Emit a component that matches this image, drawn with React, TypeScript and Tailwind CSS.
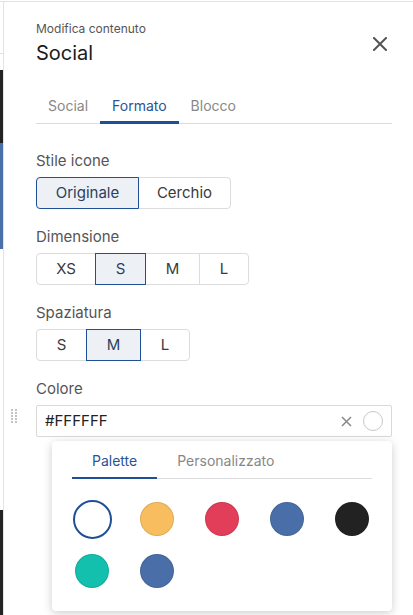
import React from "react";

function Btn({ label, w, sel, first, last }: { label: string; w: string; sel?: boolean; first?: boolean; last?: boolean }) {
  return (
    <div
      className={
        "h-[32px] flex items-center justify-center border text-[15px] " +
        w +
        (first ? " rounded-l-[4px]" : " -ml-px") +
        (last ? " rounded-r-[4px]" : "") +
        (sel ? " border-[#1f4f96] bg-[#edf1f6] text-[#2b3f5c] relative z-10" : " border-[#dcdcdc] bg-white text-[#3a3a3a]")
      }
    >
      {label}
    </div>
  );
}

function Section({ label, children }: { label: string; children: React.ReactNode }) {
  return (
    <div className="flex flex-col">
      <div className="text-[15px] leading-5 text-[#555]">{label}</div>
      <div className="mt-[6px] flex">{children}</div>
    </div>
  );
}

export default function App() {
  const colors = ["#f8bd5f", "#e23e5a", "#4a6fa8", "#222222", "#13bfad", "#4a6fa8"];
  return (
    <div className="w-[413px] h-[615px] overflow-hidden bg-white font-['Inter',sans-serif] flex flex-col">
      <div className="h-px mt-px bg-[#e3e3e3] shrink-0" />
      <div className="flex flex-1">
        <div className="w-[3px] flex flex-col shrink-0">
          <div className="h-[51px] bg-white" />
          <div className="h-px bg-[#e0e0e0]" />
          <div className="h-[16px] bg-white" />
          <div className="h-[73px] bg-[#232323]" />
          <div className="h-[106px] bg-[#4a70aa]" />
          <div className="h-[261px] bg-white" />
          <div className="flex-1 bg-[#232323]" />
        </div>
        <div className="flex-1 border-l border-[#e3e3e3] pl-[32px] pr-[21px] flex flex-col">
          <div className="pt-[19px] flex items-center justify-between">
            <div className="flex flex-col">
              <div className="text-[12px] leading-4 text-[#555]">Modifica contenuto</div>
              <div className="text-[20px] leading-7 mt-[2px] text-[#1c1c1c]">Social</div>
            </div>
            <svg width="14" height="14" viewBox="0 0 14 14" className="mr-[5px]">
              <path d="M1 1L13 13M13 1L1 13" stroke="#555" strokeWidth="2" strokeLinecap="square" />
            </svg>
          </div>

          <div className="mt-[29px] flex border-b border-[#dcdcdc]">
            <div className="px-3 pb-[5px] border-b-[3px] border-transparent -mb-px text-[14px] leading-5 text-[#888]">Social</div>
            <div className="px-3 pb-[5px] border-b-[3px] border-[#1f4f96] -mb-px text-[14px] leading-5 text-[#2a5495]">Formato</div>
            <div className="px-3 pb-[5px] border-b-[3px] border-transparent -mb-px text-[14px] leading-5 text-[#888]">Blocco</div>
          </div>

          <div className="mt-[27px] flex flex-col gap-[18px]">
            <Section label="Stile icone">
              <Btn label="Originale" w="w-[103px]" sel first />
              <Btn label="Cerchio" w="w-[93px]" last />
            </Section>
            <Section label="Dimensione">
              <Btn label="XS" w="w-[60px]" first />
              <Btn label="S" w="w-[51px]" sel />
              <Btn label="M" w="w-[55px]" />
              <Btn label="L" w="w-[50px]" last />
            </Section>
            <Section label="Spaziatura">
              <Btn label="S" w="w-[51px]" first />
              <Btn label="M" w="w-[55px]" sel />
              <Btn label="L" w="w-[50px]" last />
            </Section>
            <div className="flex flex-col">
              <div className="text-[15px] leading-5 text-[#555]">Colore</div>
              <div className="mt-[6px] flex items-start -ml-[25px]">
                <div className="w-[25px] pt-[4px]">
                  <svg width="6" height="15" viewBox="0 0 6 15">
                    {[0, 1, 2, 3, 4].map((r) => (
                      <g key={r}>
                        <rect x="0" y={r * 3} width="2" height="2" fill="#c4c4c4" />
                        <rect x="4" y={r * 3} width="2" height="2" fill="#c4c4c4" />
                      </g>
                    ))}
                  </svg>
                </div>
                <div className="flex-1 h-[32px] border border-[#d9d9d9] rounded-[2px] pl-[8px] pr-[8px] flex items-center">
                  <span className="flex-1 text-[15px] text-[#222]">#FFFFFF</span>
                  <svg width="11" height="11" viewBox="0 0 11 11">
                    <path d="M1 1L10 10M10 1L1 10" stroke="#888" strokeWidth="1.5" />
                  </svg>
                  <div className="ml-[11px] w-[20px] h-[20px] rounded-full border border-[#c8c8c8] bg-white" />
                </div>
              </div>
              <div className="mt-[4px] ml-[16px] rounded-[4px] bg-white shadow-[0_2px_10px_rgba(0,0,0,0.2)] px-[20px] pt-[10px] pb-[20px]">
                <div className="flex border-b border-[#dcdcdc]">
                  <div className="px-5 pb-[6px] border-b-2 border-[#1f4f96] -mb-px text-[14px] leading-5 text-[#2a5495]">Palette</div>
                  <div className="px-5 pb-[6px] border-b-2 border-transparent -mb-px text-[14px] leading-5 text-[#888]">Personalizzato</div>
                </div>
                <div className="mt-[20px] grid grid-cols-[repeat(5,40px)] gap-x-[25px] gap-y-[12px]">
                  <div className="w-[40px] h-[40px] flex items-center justify-center">
                    <div className="w-[39px] h-[39px] rounded-full border-[2.5px] border-[#1f4f96] bg-white" />
                  </div>
                  {colors.map((c, i) => (
                    <div key={i} className="w-[40px] h-[40px] flex items-center justify-center">
                      <div className="w-[34px] h-[34px] rounded-full border border-black/10" style={{ backgroundColor: c }} />
                    </div>
                  ))}
                </div>
              </div>
            </div>
          </div>
        </div>
      </div>
    </div>
  );
}
